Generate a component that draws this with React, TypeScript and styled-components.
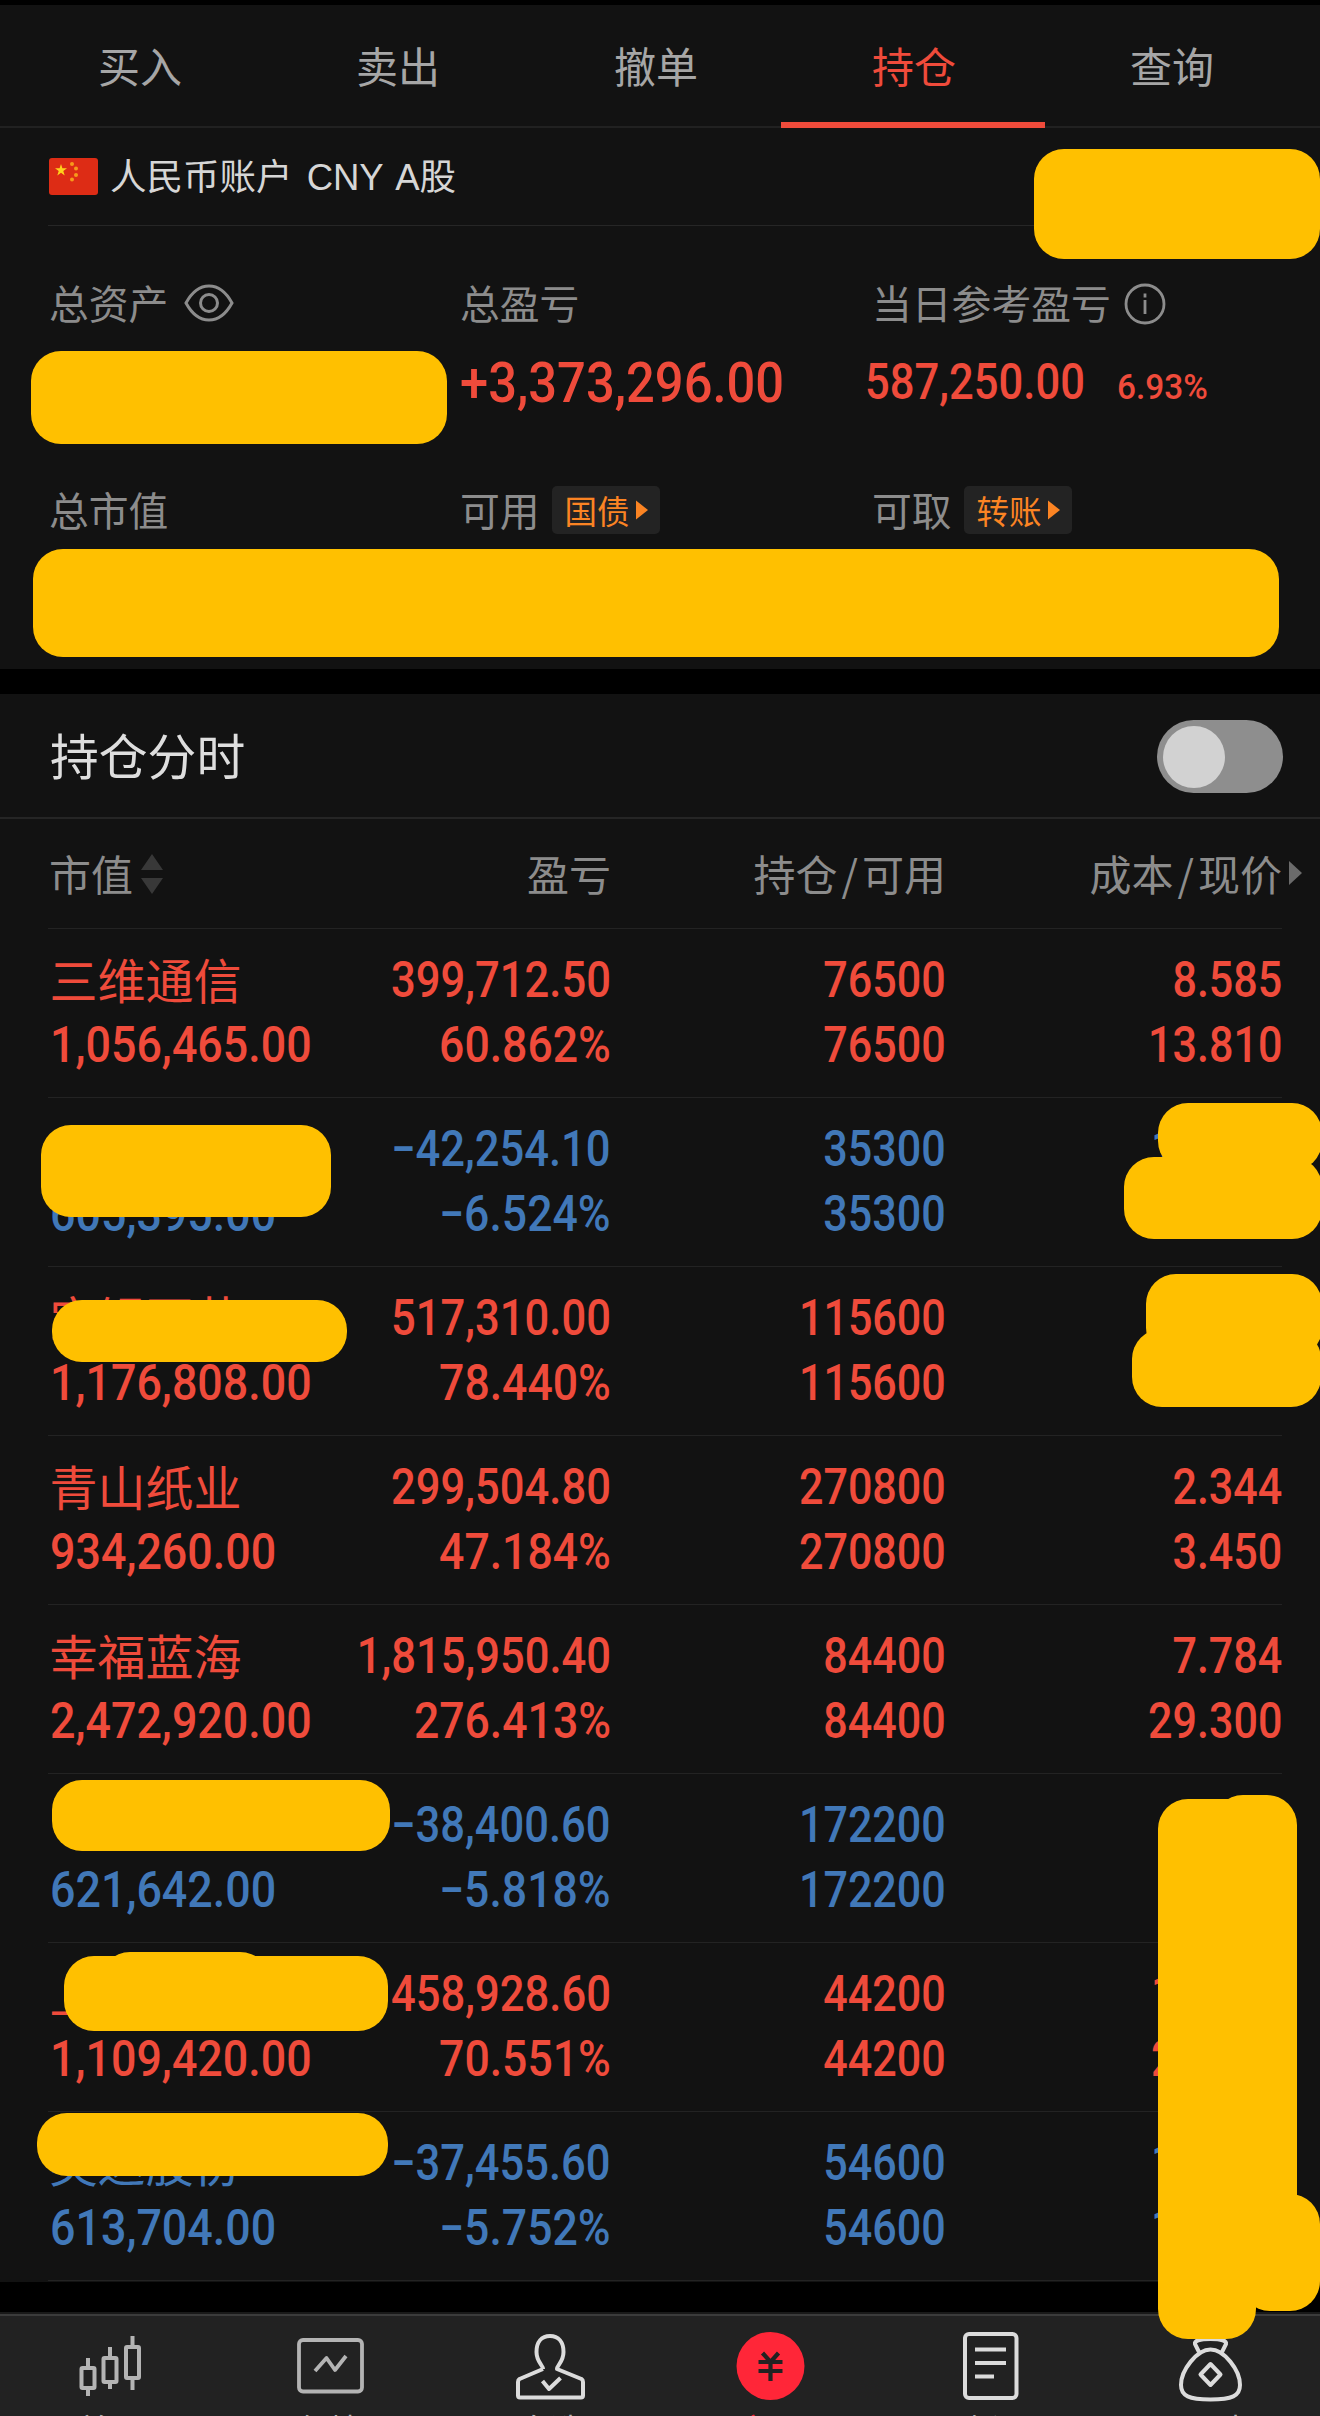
import React from 'react';
import styled, { createGlobalStyle } from 'styled-components';

const color = {
  panel: '#121212',
  line: '#232323',
  gray: '#8c8c8c',
  red: '#ef4b3b',
  blue: '#4178b8',
  mask: '#ffc000',
  orange: '#fb8423',
};

const GlobalStyle = createGlobalStyle`
  *, *::before, *::after { box-sizing: border-box; }
  body { margin: 0; background: #000; }
`;

const Page = styled.div`
  position: relative;
  display: flex;
  flex-direction: column;
  width: 1320px;
  height: 2416px;
  padding-top: 5px;
  overflow: hidden;
  background: #000;
  font-family: 'Noto Sans CJK SC', sans-serif;
  white-space: nowrap;
`;

const Tabs = styled.nav`
  display: flex;
  flex: none;
  height: 123px;
  padding: 0 19px 0 11px;
  background: ${color.panel};
  border-bottom: 2px solid #212121;
`;

const Tab = styled.div<{ $active?: boolean }>`
  position: relative;
  width: 258px;
  line-height: 119px;
  text-align: center;
  font-size: 42px;
  color: ${p => (p.$active ? color.red : '#a6a6a6')};
  &::after {
    content: '';
    display: ${p => (p.$active ? 'block' : 'none')};
    position: absolute;
    left: -4px;
    right: -2px;
    bottom: -2px;
    height: 6px;
    background: ${color.red};
  }
`;

const Summary = styled.section`
  display: flex;
  flex-direction: column;
  flex: none;
  height: 541px;
  padding: 0 38px 0 48px;
  background: ${color.panel};
`;

const Account = styled.div`
  display: flex;
  align-items: center;
  flex: none;
  gap: 12px;
  height: 98px;
  padding-left: 1px;
  border-bottom: 1px solid #262626;
  font-family: 'Liberation Sans', 'Noto Sans CJK SC', sans-serif;
  font-size: 36.5px;
  line-height: 50px;
  word-spacing: 4px;
  color: #d6d6d6;
`;

const AccountName = styled.div`
  padding-top: 2px;
`;

const Metrics = styled.div<{ $top: number }>`
  display: grid;
  grid-template-columns: 411px 412px 1fr;
  margin-top: ${p => p.$top}px;
`;

const Metric = styled.div`
  display: flex;
  flex-direction: column;
`;

const Label = styled.div`
  display: flex;
  align-items: center;
  height: 60px;
  padding-left: 1px;
  font-size: 39.8px;
  line-height: 58px;
  color: ${color.gray};
`;

const Num = styled.span<{ $size?: number; $right?: boolean; $weight?: number; $scale?: number }>`
  display: inline-block;
  font-family: Roboto, sans-serif;
  font-weight: ${p => p.$weight ?? 500};
  font-size: ${p => p.$size ?? 49.5}px;
  transform: scaleX(${p => p.$scale ?? 0.88});
  transform-origin: ${p => (p.$right ? 'right' : 'left')} center;
`;

const Figure = styled.div<{ $shift?: number; $drop?: number }>`
  display: flex;
  align-items: baseline;
  height: 66px;
  margin-top: ${p => 17 + (p.$drop ?? 0)}px;
  margin-left: ${p => p.$shift ?? 0}px;
  line-height: 66px;
  color: ${color.red};
`;

const Percent = styled.div`
  margin-left: 2px;
`;

const Chip = styled.span`
  display: flex;
  align-items: center;
  gap: 6px;
  width: 108px;
  height: 48px;
  margin-top: 2px;
  margin-left: 12.5px;
  padding-left: 12.5px;
  border-radius: 5px;
  background: #232323;
  font-size: 32.5px;
  line-height: 44px;
  color: ${color.orange};
`;

const Switcher = styled.section`
  display: flex;
  align-items: center;
  justify-content: space-between;
  flex: none;
  height: 125px;
  margin-top: 25px;
  padding: 0 37px 0 50px;
  background: ${color.panel};
  border-bottom: 2px solid #252525;
  font-size: 48.8px;
  line-height: 120px;
  color: #dedede;
`;

const SwitchTitle = styled.div`
  height: 123px;
`;

const Toggle = styled.div`
  display: flex;
  align-items: center;
  width: 126px;
  height: 73px;
  margin-top: 2px;
  padding-left: 6px;
  border-radius: 37px;
  background: #8e8e8e;
`;

const Knob = styled.div`
  width: 62px;
  height: 62px;
  border-radius: 50%;
  background: #d2d2d2;
`;

const Table = styled.section`
  flex: none;
  padding: 0 38px 1px 48px;
  background: ${color.panel};
`;

const Row = styled.div<{ $tone?: string }>`
  display: grid;
  grid-template-columns: 300px 263px 335px 336px;
  height: 169px;
  padding-top: 19px;
  border-bottom: 1px solid ${color.line};
  color: ${p => p.$tone};
`;

const HeadRow = styled(Row)`
  height: 110px;
  padding-top: 24px;
  font-size: 42px;
  line-height: 58px;
  color: ${color.gray};
`;

const Cell = styled.div<{ $right?: boolean }>`
  display: flex;
  flex-direction: column;
  align-items: ${p => (p.$right ? 'flex-end' : 'flex-start')};
  padding-left: ${p => (p.$right ? 0 : 1.5)}px;
  line-height: 65px;
`;

const Line = styled.div`
  height: 65px;
`;

const Name = styled(Line)`
  font-size: 48px;
  line-height: 60px;
`;

const Clipped = styled(Line)`
  width: 131px;
`;

const HeadCell = styled.div<{ $right?: boolean }>`
  display: flex;
  align-items: center;
  justify-content: ${p => (p.$right ? 'flex-end' : 'flex-start')};
  height: 60px;
  padding-left: ${p => (p.$right ? 0 : 1)}px;
`;

const Slash = styled.span`
  margin: 0 4px;
`;

const SortIcon = styled.svg`
  margin: 2px 0 0 8px;
`;

const MoreIcon = styled.svg`
  margin: 0 -20px 0 7px;
`;

const EyeIcon = styled.svg`
  margin: 2px 0 0 16px;
`;

const InfoIcon = styled.svg`
  margin: 3px 0 0 13px;
`;

const TabBar = styled.footer`
  display: flex;
  flex: none;
  height: 104px;
  margin-top: 30px;
  background: #222;
  border-top: 2px solid #191919;
  box-shadow: inset 0 2px 0 #3b3b3b;
  overflow: hidden;
`;

const TabItem = styled.div<{ $active?: boolean }>`
  display: flex;
  flex-direction: column;
  align-items: center;
  width: 220px;
  padding-top: 12px;
  font-size: 32px;
  line-height: 48px;
  color: ${p => (p.$active ? '#ff2638' : '#b5b5b5')};
  svg { flex: none; margin-bottom: -2px; }
`;

const Mask = styled.div<{ $x: number; $y: number; $w: number; $h: number }>`
  position: absolute;
  left: ${p => p.$x}px;
  top: ${p => p.$y}px;
  width: ${p => p.$w}px;
  height: ${p => p.$h}px;
  border-radius: 30px;
  background: ${color.mask};
`;

type Holding = {
  name?: string;
  value: string;
  profit: string;
  rate: string;
  qty: string;
  cost?: string;
  price?: string;
  clipped?: boolean;
};

const holdings: Holding[] = [
  { name: '三维通信', value: '1,056,465.00', profit: '399,712.50', rate: '60.862%', qty: '76500', cost: '8.585', price: '13.810' },
  { value: '605,395.00', profit: '−42,254.10', rate: '−6.524%', qty: '35300', cost: '1', clipped: true },
  { name: '宝银亚艺', value: '1,176,808.00', profit: '517,310.00', rate: '78.440%', qty: '115600' },
  { name: '青山纸业', value: '934,260.00', profit: '299,504.80', rate: '47.184%', qty: '270800', cost: '2.344', price: '3.450' },
  { name: '幸福蓝海', value: '2,472,920.00', profit: '1,815,950.40', rate: '276.413%', qty: '84400', cost: '7.784', price: '29.300' },
  { value: '621,642.00', profit: '−38,400.60', rate: '−5.818%', qty: '172200' },
  { name: '上', value: '1,109,420.00', profit: '458,928.60', rate: '70.551%', qty: '44200', cost: '1', price: '2', clipped: true },
  { name: '英达股份', value: '613,704.00', profit: '−37,455.60', rate: '−5.752%', qty: '54600', cost: '1', price: '1', clipped: true },
];

const masks = [
  [1034, 149, 286, 110],
  [31, 351, 416, 93],
  [33, 549, 1246, 108],
  [41, 1125, 290, 92],
  [52, 1300, 295, 62],
  [1158, 1103, 164, 68],
  [1124, 1157, 198, 82],
  [1146, 1274, 176, 84],
  [1132, 1329, 189, 78],
  [52, 1780, 338, 71],
  [64, 1956, 324, 75],
  [100, 1952, 170, 70],
  [37, 2113, 351, 63],
  [1158, 1799, 98, 540],
  [1170, 1799, 110, 490],
  [1213, 1795, 84, 490],
  [1240, 2194, 80, 117],
];

const Flag = () => (
  <svg width="49" height="37" viewBox="0 0 49 37">
    <rect width="49" height="37" rx="3" fill="#dd2c15" />
    <path d="M12 6l1.4 4.3H18l-3.7 2.7 1.4 4.5L12 14.8l-3.7 2.7L9.700 13 6 10.300h4.600z" fill="#ffd21c" />
    <g fill="#f79a1a">
      <circle cx="23" cy="6" r="2" />
      <circle cx="27" cy="10.500" r="2" />
      <circle cx="27" cy="17" r="2" />
      <circle cx="23" cy="21.500" r="2" />
    </g>
  </svg>
);

const Arrow = () => (
  <svg width="12" height="20" viewBox="0 0 12 20">
    <path d="M0 0.500L12 10 0 19.500z" fill={color.orange} />
  </svg>
);

const Candles = () => (
  <svg width="90" height="80" viewBox="10.500 0 90 80" fill="none" stroke="#b4b4b4" strokeWidth="4">
    <rect x="27" y="42" width="13" height="20" rx="1" />
    <path d="M33.500 32v10M33.500 62v8" />
    <rect x="49" y="32" width="13" height="24" rx="1" />
    <path d="M55.500 21v11M55.500 56v7" />
    <rect x="71.500" y="21" width="13" height="31" rx="1" />
    <path d="M78 10v11M78 52v12" />
  </svg>
);

const ChartBox = () => (
  <svg width="90" height="80" viewBox="0 0 90 80" fill="none" stroke="#b4b4b4" strokeWidth="3.800">
    <rect x="14" y="14" width="63" height="51.500" rx="4" />
    <path d="M30 45l11.500-13L50 44l11-14" strokeLinejoin="round" />
  </svg>
);

const Person = () => (
  <svg width="90" height="80" viewBox="0.500 0 90 80" fill="none" stroke="#dcdcdc" strokeWidth="4" strokeLinejoin="round">
    <path d="M38.500 43c0-4-6.500-7-6.500-17 0-10 5-16 13.500-16S59 16 59 26c0 10-6.500 13-6.500 17L77 53q1.500 1 1.500 3v13.500q0 2-2 2h-61q-2 0-2-2V56q0-2 1.500-3L38.500 43" />
    <path d="M38 55l6.500 8L56 52" />
  </svg>
);

const Yuan = () => (
  <svg width="90" height="80" viewBox="0 0 90 80" fill="none">
    <circle cx="45.500" cy="40" r="34" fill="#ff2638" />
    <path d="M37.500 27l8 9 8-9M33.500 36h24M33.500 45h24M45.500 36v19" stroke="#222" strokeWidth="4.200" />
  </svg>
);

const Doc = () => (
  <svg width="90" height="80" viewBox="0 0 90 80" fill="none" stroke="#dcdcdc" strokeWidth="4">
    <rect x="20" y="8" width="51.500" height="64" rx="4" />
    <path d="M30 23.500h31M30 37h31M30 50.500h19" />
  </svg>
);

const Purse = () => (
  <svg width="90" height="80" viewBox="0 0 90 80" fill="none" stroke="#dcdcdc" strokeWidth="4" strokeLinejoin="round">
    <path d="M34 26l-4-8q-1-5 15.500-5T61 18l-4 8" />
    <path d="M45.500 23.500C32 23.500 16 44 16 59c0 11 8 14.500 29.500 14.500S75 70 75 59C75 44 59 23.500 45.500 23.500z" />
    <path d="M45.500 38l10 10.500-10 10.500-10-10.500z" />
  </svg>
);

const navItems = [
  { label: '首页', icon: <Candles /> },
  { label: '行情', icon: <ChartBox /> },
  { label: '自选', icon: <Person /> },
  { label: '交易', icon: <Yuan />, active: true },
  { label: '资讯', icon: <Doc /> },
  { label: '理财', icon: <Purse /> },
];

function HoldingRow({ item }: { item: Holding }) {
  const PriceLine = item.clipped ? Clipped : Line;
  return (
    <Row $tone={item.profit.startsWith('−') ? color.blue : color.red}>
      <Cell>
        <Name>{item.name}</Name>
        <Line><Num $scale={0.905}>{item.value}</Num></Line>
      </Cell>
      <Cell $right>
        <Line><Num $right>{item.profit}</Num></Line>
        <Line><Num $right $scale={0.9}>{item.rate}</Num></Line>
      </Cell>
      <Cell $right>
        <Line><Num $right $scale={0.87}>{item.qty}</Num></Line>
        <Line><Num $right $scale={0.87}>{item.qty}</Num></Line>
      </Cell>
      <Cell $right>
        <PriceLine><Num $right={!item.clipped} $scale={0.87}>{item.cost}</Num></PriceLine>
        <PriceLine><Num $right={!item.clipped} $scale={0.87}>{item.price}</Num></PriceLine>
      </Cell>
    </Row>
  );
}

export default function App() {
  return (
    <>
      <GlobalStyle />
      <Page>
        <Tabs>
          {['买入', '卖出', '撤单', '持仓', '查询'].map(t => (
            <Tab key={t} $active={t === '持仓'}>{t}</Tab>
          ))}
        </Tabs>

        <Summary>
          <Account>
            <Flag />
            <AccountName>人民币账户 CNY A股</AccountName>
          </Account>
          <Metrics $top={46}>
            <Metric>
              <Label>
                总资产
                <EyeIcon width="50" height="38" viewBox="0 0 50 38" fill="none" stroke={color.gray} strokeWidth="3">
                  <path d="M2 19C8 8 16 2 25 2s17 6 23 17c-6 11-14 17-23 17S8 30 2 19z" />
                  <circle cx="25" cy="19" r="8.500" />
                </EyeIcon>
              </Label>
            </Metric>
            <Metric>
              <Label>总盈亏</Label>
              <Figure $shift={1} $drop={1}><Num $size={56} $scale={0.905}>+3,373,296.00</Num></Figure>
            </Metric>
            <Metric>
              <Label>
                当日参考盈亏
                <InfoIcon width="42" height="42" viewBox="0 0 42 42" fill="none" stroke={color.gray} strokeWidth="2.800">
                  <circle cx="21" cy="21" r="19" />
                  <path d="M21 17v14M21 10.500v4" />
                </InfoIcon>
              </Label>
              <Figure $shift={-6}>
                <Num>587,250.00</Num>
                <Percent><Num $size={35.5} $scale={0.94}>6.93%</Num></Percent>
              </Figure>
            </Metric>
          </Metrics>
          <Metrics $top={63}>
            <Label>总市值</Label>
            <Label>可用<Chip>国债<Arrow /></Chip></Label>
            <Label>可取<Chip>转账<Arrow /></Chip></Label>
          </Metrics>
        </Summary>

        <Switcher>
          <SwitchTitle>持仓分时</SwitchTitle>
          <Toggle><Knob /></Toggle>
        </Switcher>

        <Table>
          <HeadRow>
            <HeadCell>
              市值
              <SortIcon width="22" height="42" viewBox="0 0 22 42" fill="#383838">
                <path d="M11 1l11 16H0zM11 41L0 25h22z" />
              </SortIcon>
            </HeadCell>
            <HeadCell $right>盈亏</HeadCell>
            <HeadCell $right>持仓<Slash>/</Slash>可用</HeadCell>
            <HeadCell $right>
              成本<Slash>/</Slash>现价
              <MoreIcon width="13" height="24" viewBox="0 0 13 24" fill="#6b6b6b">
                <path d="M0 0l13 12L0 24z" />
              </MoreIcon>
            </HeadCell>
          </HeadRow>
          {holdings.map(h => <HoldingRow key={h.value} item={h} />)}
        </Table>

        <TabBar>
          {navItems.map(n => (
            <TabItem key={n.label} $active={n.active}>
              {n.icon}
              {n.label}
            </TabItem>
          ))}
        </TabBar>

        {masks.map(([x, y, w, h]) => (
          <Mask key={`${x}-${y}`} $x={x} $y={y} $w={w} $h={h} />
        ))}
      </Page>
    </>
  );
}
